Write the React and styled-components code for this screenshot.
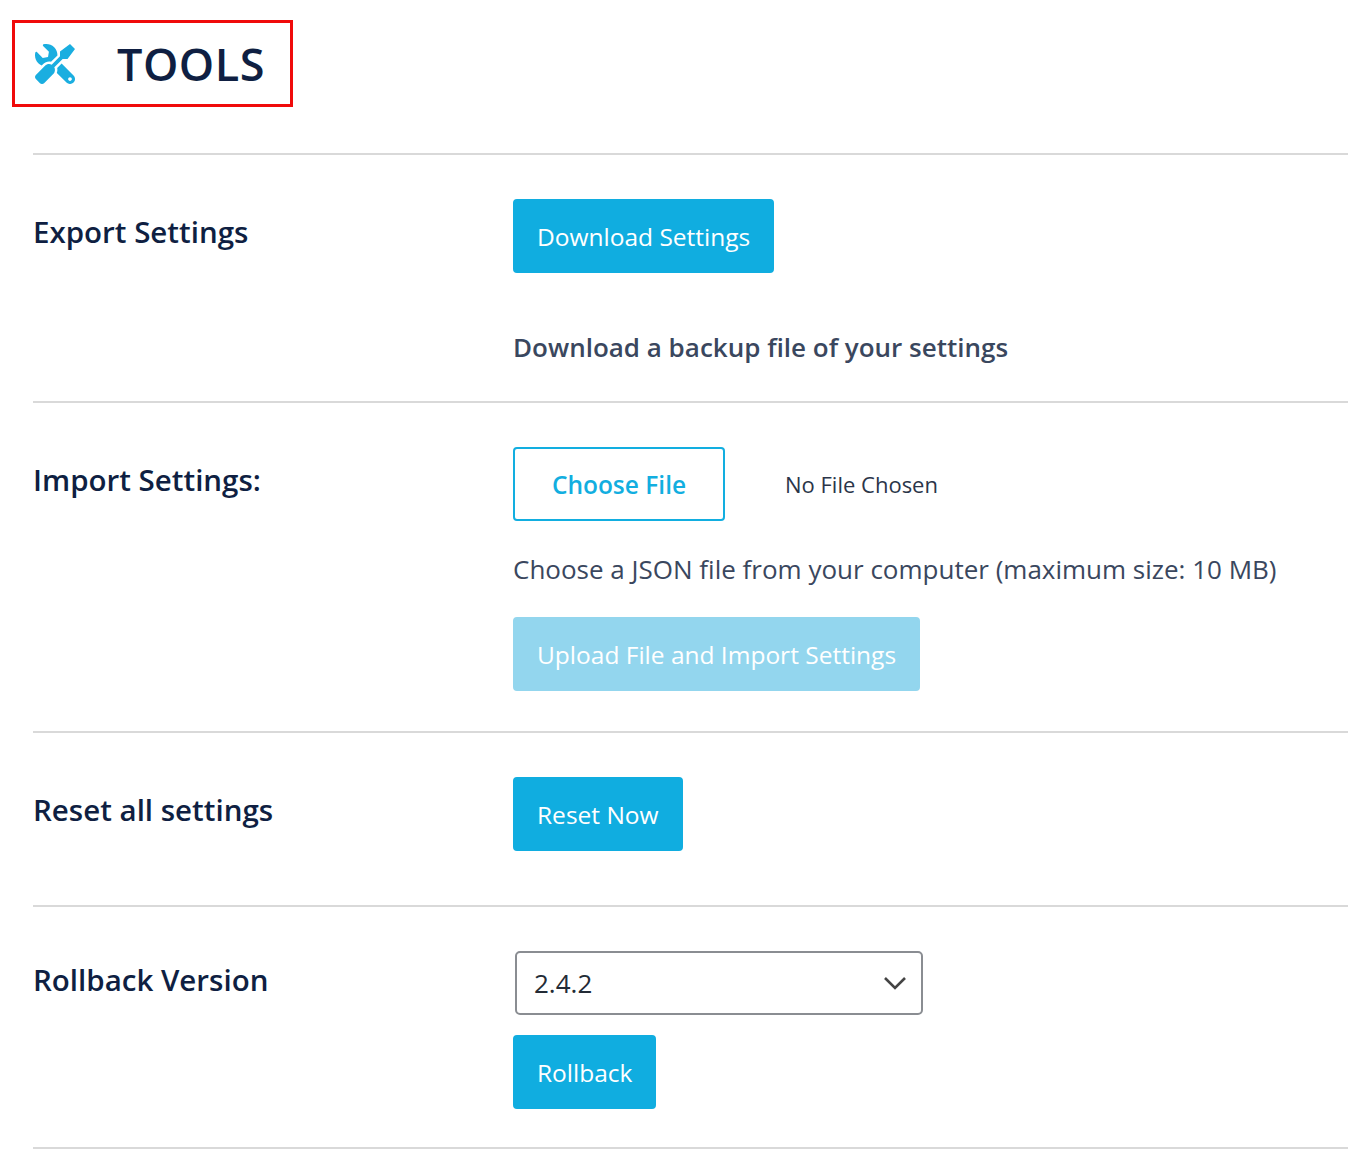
import React from 'react';
import styled, { createGlobalStyle } from 'styled-components';
import { FaTools } from 'react-icons/fa';

const Global = createGlobalStyle`
  body { margin: 0; background: #fff; font-family: "Open Sans", sans-serif; }
`;

const Page = styled.div`
  padding: 20px 0 0 33px;
`;

const Header = styled.div`
  display: flex;
  align-items: center;
  gap: 42px;
  width: 281px;
  height: 87px;
  margin-left: -21px;
  padding-left: 20px;
  box-sizing: border-box;
  border: 3px solid #f00a0a;
  margin-bottom: 46px;
  color: #1aaee0;
`;

const Title = styled.h1`
  margin: 0;
  font-size: 45px;
  font-weight: 600;
  color: #0f1f42;
  letter-spacing: 0.5px;
`;

const Row = styled.div`
  display: grid;
  grid-template-columns: 480px 1fr;
  border-top: 2px solid #d9d9d9;
  padding: ${p => p.$pad || '44px 0 36px'};
  &:last-child { border-bottom: 2px solid #d9d9d9; }
`;

const Label = styled.div`
  font-size: 29.5px;
  font-weight: 600;
  color: #0f1f42;
  padding-top: ${p => p.$top || '12px'};
`;

const Col = styled.div`
  display: flex;
  flex-direction: column;
  align-items: flex-start;
  gap: ${p => p.$gap || '20px'};
`;

const Button = styled.button`
  font-family: inherit;
  font-size: 24.5px;
  height: 74px;
  padding: 0 22px;
  border-radius: 4px;
  border: 2px solid ${p => (p.$outline ? '#12aee0' : p.$disabled ? '#93d6ee' : '#10ade0')};
  background: ${p => (p.$outline ? '#fff' : p.$disabled ? '#93d6ee' : '#10ade0')};
  color: ${p => (p.$outline ? '#12aee0' : '#fff')};
  font-weight: ${p => (p.$outline ? 600 : 400)};
  width: ${p => p.$w || 'auto'};
`;

const Desc = styled.div`
  font-size: 26px;
  font-weight: ${p => p.$bold ? 600 : 400};
  color: #3a475e;
`;

const FileLine = styled.div`
  display: flex;
  align-items: center;
  gap: 60px;
`;

const FileName = styled.span`
  font-size: 22px;
  font-weight: 500;
  color: #2b3549;
`;

const Select = styled.div`
  width: 408px;
  height: 64px;
  box-sizing: border-box;
  margin-left: 2px;
  border: 2px solid #8a8d92;
  border-radius: 5px;
  display: flex;
  align-items: center;
  justify-content: space-between;
  padding: 0 14px 0 17px;
  font-size: 26px;
  color: #232b36;
`;

export default function App() {
  return (
    <Page>
      <Global />
      <Header>
        <FaTools size={40} style={{ transform: 'scaleX(-1)' }} />
        <Title>TOOLS</Title>
      </Header>
      <Row>
        <Label>Export Settings</Label>
        <Col $gap="56px">
          <Button>Download Settings</Button>
          <Desc $bold>Download a backup file of your settings</Desc>
        </Col>
      </Row>
      <Row $pad="44px 0 40px">
        <Label>Import Settings:</Label>
        <Col $gap="30px">
          <FileLine>
            <Button $outline $w="212px">Choose File</Button>
            <FileName>No File Chosen</FileName>
          </FileLine>
          <Desc>Choose a JSON file from your computer (maximum size: 10 MB)</Desc>
          <Button $disabled>Upload File and Import Settings</Button>
        </Col>
      </Row>
      <Row $pad="44px 0 54px">
        <Label>Reset all settings</Label>
        <Col>
          <Button>Reset Now</Button>
        </Col>
      </Row>
      <Row $pad="44px 0 38px">
        <Label $top="8px">Rollback Version</Label>
        <Col $gap="20px">
          <Select>
            <span>2.4.2</span>
            <svg width="24" height="14" viewBox="0 0 24 14" fill="none" stroke="#444" strokeWidth="2.6">
              <path d="M2 2l10 10L22 2" />
            </svg>
          </Select>
          <Button>Rollback</Button>
        </Col>
      </Row>
    </Page>
  );
}
